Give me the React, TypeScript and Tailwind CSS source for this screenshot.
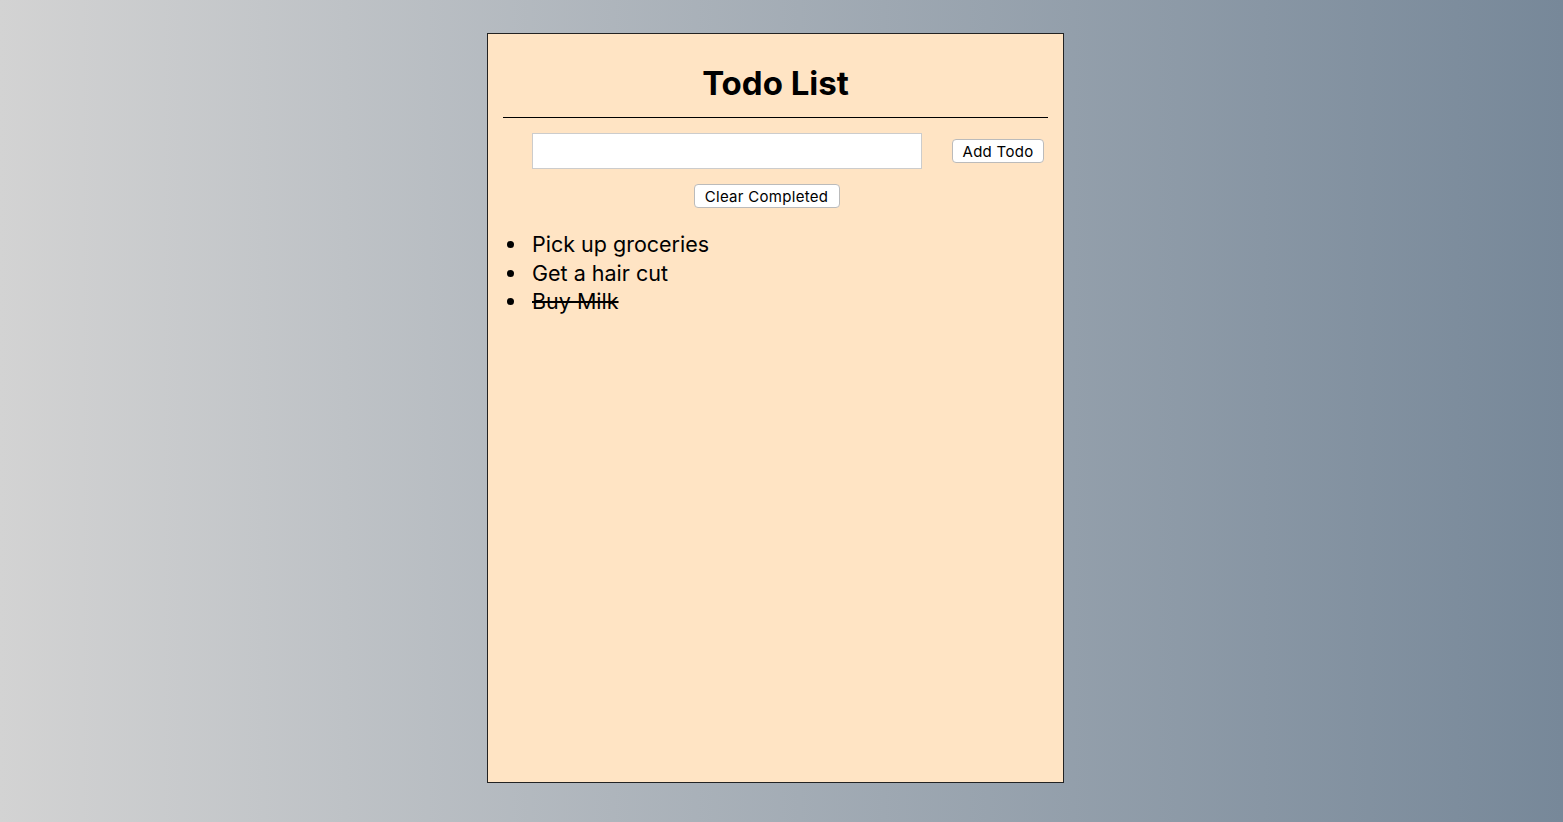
export default function App() {
  const todos = [
    { id: 1, text: "Pick up groceries", done: false },
    { id: 2, text: "Get a hair cut", done: false },
    { id: 3, text: "Buy Milk", done: true },
  ];

  return (
    <div className="min-h-[822px] w-full bg-gradient-to-r from-[#d3d3d3] to-[#778899] pt-[33px] flex justify-center pr-[12px] font-['Inter','Liberation_Sans',sans-serif] text-black">
      <div className="w-[577px] h-[750px] bg-[#ffe4c4] border border-[#222] px-[15px]">
        <h1 className="text-[33px] font-bold text-center leading-[39px] pt-[30px] pb-[14px]">
          Todo List
        </h1>
        <hr className="border-0 border-t border-black" />
        <div className="flex items-center mt-[15px] pl-[29px]">
          <input
            type="text"
            className="w-[390px] h-[36px] bg-white border border-[#ccc] outline-none"
          />
          <button className="ml-[30px] w-[92px] h-[24px] pt-[2px] bg-white border border-[#bbb] rounded-[4px] text-[15px] tracking-[0.3px] leading-[20px]">
            Add Todo
          </button>
        </div>
        <div className="flex justify-center mt-[15px] pr-[18px]">
          <button className="w-[146px] h-[24px] pt-[2px] bg-white border border-[#bbb] rounded-[4px] text-[15px] tracking-[0.3px] leading-[20px]">
            Clear Completed
          </button>
        </div>
        <ul className="pl-[29px] mt-[22px] text-[21.5px] leading-[28.5px]">
          {todos.map((t) => (
            <li
              key={t.id}
              className="relative before:content-[''] before:absolute before:left-[-25px] before:top-[11px] before:w-[7px] before:h-[7px] before:rounded-full before:bg-black"
            >
              <span className={t.done ? "line-through" : ""}>{t.text}</span>
            </li>
          ))}
        </ul>
      </div>
    </div>
  );
}
